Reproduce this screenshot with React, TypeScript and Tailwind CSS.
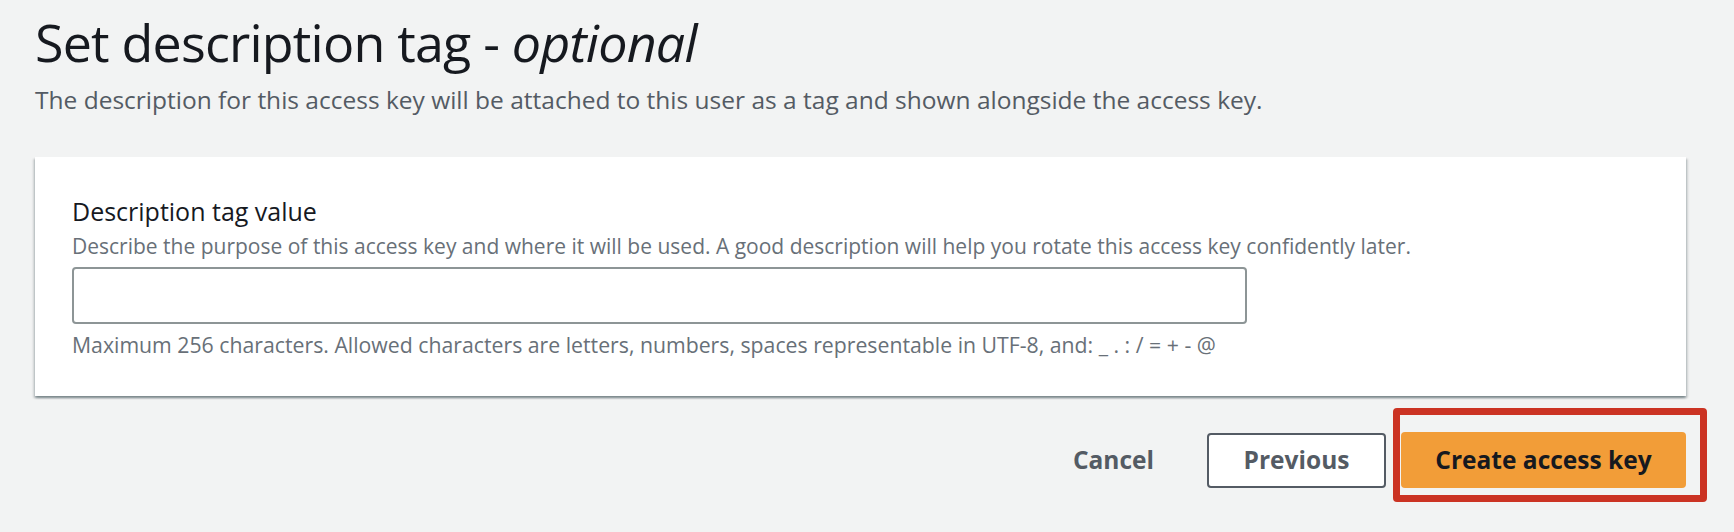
export default function App() {
  return (
    <div className="min-h-[532px] bg-[#f2f3f3] pl-[35px] pr-[48px] pt-[10px] font-['Open_Sans',sans-serif]">
      <h1 className="text-[52px] leading-[64px] font-normal tracking-[-0.8px] text-[#16191f]">
        Set description tag - <i>optional</i>
      </h1>
      <p className="mt-[10px] text-[24.5px] leading-[32px] text-[#545b64]">
        The description for this access key will be attached to this user as a tag and shown alongside the access key.
      </p>

      <div className="mt-[41px] bg-white pl-[37px] pr-[38px] pt-[38px] pb-[36px] shadow-[0_2px_2px_0_rgba(0,28,36,0.35),2px_2px_2px_0_rgba(0,28,36,0.12),-2px_2px_2px_0_rgba(0,28,36,0.12)]">
        <label className="block text-[25px] leading-[32px] text-[#16191f]">Description tag value</label>
        <p className="mt-[4px] text-[21px] leading-[30px] text-[#687078]">
          Describe the purpose of this access key and where it will be used. A good description will help you rotate this access key confidently later.
        </p>
        <input
          type="text"
          className="mt-[6px] block h-[57px] w-[1175px] rounded-[4px] border-2 border-[#8d9596] bg-white px-4 text-[24px] outline-none"
        />
        <p className="mt-[6px] text-[21.25px] leading-[30px] text-[#687078]">
          Maximum 256 characters. Allowed characters are letters, numbers, spaces representable in UTF-8, and: _ . : / = + - @
        </p>
      </div>

      <div className="mt-[36px] flex items-center justify-end">
        <button className="mr-[53px] text-[24.5px] font-bold text-[#545b64]">Cancel</button>
        <button className="h-[55px] w-[179px] rounded-[4px] border-2 border-[#545b64] bg-white text-[24.5px] font-bold text-[#545b64]">
          Previous
        </button>
        <div className="relative ml-[15px]">
          <button className="h-[56px] w-[285px] rounded-[4px] bg-[#f29d38] text-[24.5px] font-bold text-[#16191f]">
            Create access key
          </button>
          <div className="pointer-events-none absolute -left-[8px] -right-[21px] -top-[24px] -bottom-[14px] rounded-[4px] border-[7px] border-[#cb3323]" />
        </div>
      </div>
    </div>
  )
}
